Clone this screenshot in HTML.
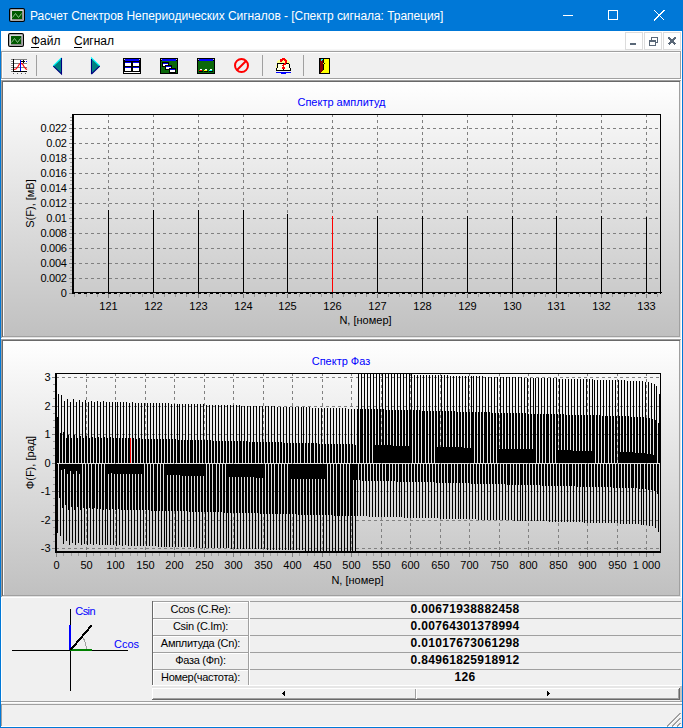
<!DOCTYPE html><html><head><meta charset="utf-8"><style>
*{margin:0;padding:0;box-sizing:border-box}
html,body{width:683px;height:728px;overflow:hidden;background:#f0f0f0;font-family:"Liberation Sans", sans-serif}
.a{position:absolute}
.t{position:absolute;white-space:nowrap;line-height:1}
svg{position:absolute;left:0;top:0}
</style></head><body><svg width="683" height="728" viewBox="0 0 683 728" shape-rendering="crispEdges" font-family='"Liberation Sans", sans-serif'><defs><linearGradient id="g" x1="0" y1="0" x2="0" y2="1"><stop offset="0" stop-color="#ffffff"/><stop offset="1" stop-color="#c0c0c0"/></linearGradient></defs><rect x="0" y="0" width="683" height="31" fill="#0078d7"/><rect x="0" y="0" width="1" height="728" fill="#0078d7"/><rect x="682" y="0" width="1" height="728" fill="#0078d7"/><rect x="0" y="727" width="683" height="1" fill="#0078d7"/><rect x="1" y="31" width="681" height="18" fill="#ffffff"/><rect x="1" y="49" width="681" height="1" fill="#f7f7f7"/><rect x="1" y="50" width="681" height="1" fill="#f0f0f0"/><rect x="1" y="51" width="680" height="1" fill="#a0a0a0"/><rect x="1" y="51" width="1" height="28" fill="#a0a0a0"/><rect x="2" y="52" width="679" height="1" fill="#ffffff"/><rect x="2" y="52" width="1" height="26" fill="#ffffff"/><rect x="1" y="78" width="680" height="1" fill="#a0a0a0"/><rect x="680" y="51" width="1" height="28" fill="#a0a0a0"/><rect x="1" y="79" width="681" height="1" fill="#ffffff"/><rect x="681" y="51" width="1" height="29" fill="#ffffff"/><rect x="1" y="80" width="680" height="1" fill="#a0a0a0"/><rect x="1" y="80" width="1" height="259" fill="#a0a0a0"/><rect x="2" y="81" width="678" height="1" fill="#696969"/><rect x="2" y="81" width="1" height="257" fill="#696969"/><rect x="1" y="338" width="681" height="1" fill="#ffffff"/><rect x="681" y="80" width="1" height="259" fill="#ffffff"/><rect x="2" y="337" width="679" height="1" fill="#e3e3e3"/><rect x="680" y="81" width="1" height="257" fill="#e3e3e3"/><rect x="3" y="82" width="677" height="255" fill="url(#g)"/><rect x="3" y="82" width="676" height="1" fill="#ffffff"/><rect x="3" y="82" width="1" height="254" fill="#ffffff"/><rect x="3" y="336" width="677" height="1" fill="#a0a0a0"/><rect x="679" y="82" width="1" height="255" fill="#a0a0a0"/><rect x="1" y="339" width="680" height="1" fill="#a0a0a0"/><rect x="1" y="339" width="1" height="259" fill="#a0a0a0"/><rect x="2" y="340" width="678" height="1" fill="#696969"/><rect x="2" y="340" width="1" height="257" fill="#696969"/><rect x="1" y="597" width="681" height="1" fill="#ffffff"/><rect x="681" y="339" width="1" height="259" fill="#ffffff"/><rect x="2" y="596" width="679" height="1" fill="#e3e3e3"/><rect x="680" y="340" width="1" height="257" fill="#e3e3e3"/><rect x="3" y="341" width="677" height="255" fill="url(#g)"/><rect x="3" y="341" width="676" height="1" fill="#ffffff"/><rect x="3" y="341" width="1" height="254" fill="#ffffff"/><rect x="3" y="595" width="677" height="1" fill="#a0a0a0"/><rect x="679" y="341" width="1" height="255" fill="#a0a0a0"/><rect x="1" y="598" width="1" height="103" fill="#ffffff"/><rect x="1" y="701" width="681" height="1" fill="#a0a0a0"/><rect x="1" y="702" width="681" height="1" fill="#ffffff"/><rect x="1" y="704" width="681" height="1" fill="#a0a0a0"/><rect x="1" y="705" width="1" height="21" fill="#a0a0a0"/><rect x="1" y="726" width="681" height="1" fill="#ffffff"/><line x1="667" y1="726.5" x2="680.5" y2="713" stroke="#a0a0a0" stroke-width="1.2"/><line x1="668" y1="726.5" x2="681" y2="714" stroke="#ffffff" stroke-width="0.8"/><line x1="672" y1="726.5" x2="680.5" y2="718" stroke="#a0a0a0" stroke-width="1.2"/><line x1="673" y1="726.5" x2="681" y2="719" stroke="#ffffff" stroke-width="0.8"/><line x1="677" y1="726.5" x2="680.5" y2="723" stroke="#a0a0a0" stroke-width="1.2"/><line x1="678" y1="726.5" x2="681" y2="724" stroke="#ffffff" stroke-width="0.8"/><rect x="152" y="601" width="529" height="1" fill="#a0a0a0"/><rect x="152" y="618" width="529" height="1" fill="#a0a0a0"/><rect x="153" y="602" width="95" height="1" fill="#ffffff"/><rect x="153" y="602" width="1" height="16" fill="#ffffff"/><rect x="152" y="635" width="529" height="1" fill="#a0a0a0"/><rect x="153" y="619" width="95" height="1" fill="#ffffff"/><rect x="153" y="619" width="1" height="16" fill="#ffffff"/><rect x="152" y="652" width="529" height="1" fill="#a0a0a0"/><rect x="153" y="636" width="95" height="1" fill="#ffffff"/><rect x="153" y="636" width="1" height="16" fill="#ffffff"/><rect x="152" y="669" width="529" height="1" fill="#a0a0a0"/><rect x="153" y="653" width="95" height="1" fill="#ffffff"/><rect x="153" y="653" width="1" height="16" fill="#ffffff"/><rect x="153" y="670" width="95" height="1" fill="#ffffff"/><rect x="153" y="670" width="1" height="16" fill="#ffffff"/><rect x="152" y="601" width="1" height="84" fill="#696969"/><rect x="248" y="601" width="1" height="84" fill="#a0a0a0"/><rect x="249" y="601" width="1" height="84" fill="#ffffff"/><rect x="152" y="685" width="529" height="1" fill="#ffffff"/><rect x="152" y="686" width="529" height="2" fill="#e6e6e6"/><rect x="680" y="686" width="2" height="15" fill="#c8c4c0"/><rect x="152" y="688" width="528" height="1" fill="#ffffff"/><rect x="152" y="688" width="1" height="12" fill="#ffffff"/><rect x="152" y="699" width="528" height="1" fill="#696969"/><rect x="679" y="688" width="1" height="12" fill="#696969"/><rect x="153" y="698" width="526" height="1" fill="#a0a0a0"/><rect x="678" y="689" width="1" height="10" fill="#a0a0a0"/><rect x="415" y="689" width="1" height="10" fill="#a0a0a0"/><rect x="416" y="689" width="1" height="10" fill="#ffffff"/><path d="M282 693.5 L285 690.5 L285 696.5 Z" fill="#000"/><path d="M550 693.5 L547 690.5 L547 696.5 Z" fill="#000"/><rect x="12" y="650" width="116" height="1" fill="#000"/><rect x="70" y="609" width="1" height="82" fill="#000"/><rect x="69" y="625" width="2" height="25" fill="#0000ff"/><rect x="70" y="649" width="22" height="2" fill="#008000"/><path d="M82 637 Q87 642 86 650" stroke="#a0a0a0" fill="none" stroke-width="1"/><line x1="70.5" y1="650" x2="91.5" y2="625.5" stroke="#000" stroke-width="2.1"/><text x="341.5" y="106" font-size="11" fill="#0000ff" text-anchor="middle" font-weight="400" >Спектр амплитуд</text><line x1="73" y1="278.5" x2="660" y2="278.5" stroke="#808080" stroke-width="1" stroke-dasharray="3 3"/><line x1="73" y1="263.5" x2="660" y2="263.5" stroke="#808080" stroke-width="1" stroke-dasharray="3 3"/><line x1="73" y1="248.5" x2="660" y2="248.5" stroke="#808080" stroke-width="1" stroke-dasharray="3 3"/><line x1="73" y1="233.5" x2="660" y2="233.5" stroke="#808080" stroke-width="1" stroke-dasharray="3 3"/><line x1="73" y1="218.5" x2="660" y2="218.5" stroke="#808080" stroke-width="1" stroke-dasharray="3 3"/><line x1="73" y1="203.5" x2="660" y2="203.5" stroke="#808080" stroke-width="1" stroke-dasharray="3 3"/><line x1="73" y1="188.5" x2="660" y2="188.5" stroke="#808080" stroke-width="1" stroke-dasharray="3 3"/><line x1="73" y1="173.5" x2="660" y2="173.5" stroke="#808080" stroke-width="1" stroke-dasharray="3 3"/><line x1="73" y1="158.5" x2="660" y2="158.5" stroke="#808080" stroke-width="1" stroke-dasharray="3 3"/><line x1="73" y1="143.5" x2="660" y2="143.5" stroke="#808080" stroke-width="1" stroke-dasharray="3 3"/><line x1="73" y1="128.5" x2="660" y2="128.5" stroke="#808080" stroke-width="1" stroke-dasharray="3 3"/><line x1="108.5" y1="114" x2="108.5" y2="291" stroke="#808080" stroke-width="1" stroke-dasharray="3 3"/><line x1="153.5" y1="114" x2="153.5" y2="291" stroke="#808080" stroke-width="1" stroke-dasharray="3 3"/><line x1="198.5" y1="114" x2="198.5" y2="291" stroke="#808080" stroke-width="1" stroke-dasharray="3 3"/><line x1="243.5" y1="114" x2="243.5" y2="291" stroke="#808080" stroke-width="1" stroke-dasharray="3 3"/><line x1="287.5" y1="114" x2="287.5" y2="291" stroke="#808080" stroke-width="1" stroke-dasharray="3 3"/><line x1="332.5" y1="114" x2="332.5" y2="291" stroke="#808080" stroke-width="1" stroke-dasharray="3 3"/><line x1="377.5" y1="114" x2="377.5" y2="291" stroke="#808080" stroke-width="1" stroke-dasharray="3 3"/><line x1="422.5" y1="114" x2="422.5" y2="291" stroke="#808080" stroke-width="1" stroke-dasharray="3 3"/><line x1="467.5" y1="114" x2="467.5" y2="291" stroke="#808080" stroke-width="1" stroke-dasharray="3 3"/><line x1="512.5" y1="114" x2="512.5" y2="291" stroke="#808080" stroke-width="1" stroke-dasharray="3 3"/><line x1="556.5" y1="114" x2="556.5" y2="291" stroke="#808080" stroke-width="1" stroke-dasharray="3 3"/><line x1="601.5" y1="114" x2="601.5" y2="291" stroke="#808080" stroke-width="1" stroke-dasharray="3 3"/><line x1="646.5" y1="114" x2="646.5" y2="291" stroke="#808080" stroke-width="1" stroke-dasharray="3 3"/><rect x="72" y="114" width="589" height="1" fill="#000"/><rect x="660" y="114" width="1" height="179" fill="#000"/><rect x="72" y="114" width="2" height="179" fill="#000"/><rect x="72" y="292" width="590" height="1" fill="#000"/><line x1="72" y1="293.5" x2="661" y2="293.5" stroke="#000" stroke-width="1" stroke-dasharray="3 3"/><rect x="69" y="293" width="3" height="1" fill="#808080"/><text x="66.7" y="297" font-size="11" fill="#000" text-anchor="end" font-weight="400" letter-spacing="-0.25" >0</text><rect x="69" y="278" width="3" height="1" fill="#808080"/><text x="66.7" y="282" font-size="11" fill="#000" text-anchor="end" font-weight="400" letter-spacing="-0.25" >0.002</text><rect x="69" y="263" width="3" height="1" fill="#808080"/><text x="66.7" y="267" font-size="11" fill="#000" text-anchor="end" font-weight="400" letter-spacing="-0.25" >0.004</text><rect x="69" y="248" width="3" height="1" fill="#808080"/><text x="66.7" y="252" font-size="11" fill="#000" text-anchor="end" font-weight="400" letter-spacing="-0.25" >0.006</text><rect x="69" y="233" width="3" height="1" fill="#808080"/><text x="66.7" y="237" font-size="11" fill="#000" text-anchor="end" font-weight="400" letter-spacing="-0.25" >0.008</text><rect x="69" y="218" width="3" height="1" fill="#808080"/><text x="66.7" y="222" font-size="11" fill="#000" text-anchor="end" font-weight="400" letter-spacing="-0.25" >0.01</text><rect x="69" y="203" width="3" height="1" fill="#808080"/><text x="66.7" y="207" font-size="11" fill="#000" text-anchor="end" font-weight="400" letter-spacing="-0.25" >0.012</text><rect x="69" y="188" width="3" height="1" fill="#808080"/><text x="66.7" y="192" font-size="11" fill="#000" text-anchor="end" font-weight="400" letter-spacing="-0.25" >0.014</text><rect x="69" y="173" width="3" height="1" fill="#808080"/><text x="66.7" y="177" font-size="11" fill="#000" text-anchor="end" font-weight="400" letter-spacing="-0.25" >0.016</text><rect x="69" y="158" width="3" height="1" fill="#808080"/><text x="66.7" y="162" font-size="11" fill="#000" text-anchor="end" font-weight="400" letter-spacing="-0.25" >0.018</text><rect x="69" y="143" width="3" height="1" fill="#808080"/><text x="66.7" y="147" font-size="11" fill="#000" text-anchor="end" font-weight="400" letter-spacing="-0.25" >0.02</text><rect x="69" y="128" width="3" height="1" fill="#808080"/><text x="66.7" y="132" font-size="11" fill="#000" text-anchor="end" font-weight="400" letter-spacing="-0.25" >0.022</text><rect x="70" y="289" width="2" height="1" fill="#a0a0a0"/><rect x="70" y="286" width="2" height="1" fill="#a0a0a0"/><rect x="70" y="282" width="2" height="1" fill="#a0a0a0"/><rect x="70" y="274" width="2" height="1" fill="#a0a0a0"/><rect x="70" y="270" width="2" height="1" fill="#a0a0a0"/><rect x="70" y="267" width="2" height="1" fill="#a0a0a0"/><rect x="70" y="259" width="2" height="1" fill="#a0a0a0"/><rect x="70" y="256" width="2" height="1" fill="#a0a0a0"/><rect x="70" y="252" width="2" height="1" fill="#a0a0a0"/><rect x="70" y="244" width="2" height="1" fill="#a0a0a0"/><rect x="70" y="240" width="2" height="1" fill="#a0a0a0"/><rect x="70" y="237" width="2" height="1" fill="#a0a0a0"/><rect x="70" y="229" width="2" height="1" fill="#a0a0a0"/><rect x="70" y="226" width="2" height="1" fill="#a0a0a0"/><rect x="70" y="222" width="2" height="1" fill="#a0a0a0"/><rect x="70" y="214" width="2" height="1" fill="#a0a0a0"/><rect x="70" y="210" width="2" height="1" fill="#a0a0a0"/><rect x="70" y="207" width="2" height="1" fill="#a0a0a0"/><rect x="70" y="199" width="2" height="1" fill="#a0a0a0"/><rect x="70" y="196" width="2" height="1" fill="#a0a0a0"/><rect x="70" y="192" width="2" height="1" fill="#a0a0a0"/><rect x="70" y="184" width="2" height="1" fill="#a0a0a0"/><rect x="70" y="180" width="2" height="1" fill="#a0a0a0"/><rect x="70" y="177" width="2" height="1" fill="#a0a0a0"/><rect x="70" y="169" width="2" height="1" fill="#a0a0a0"/><rect x="70" y="166" width="2" height="1" fill="#a0a0a0"/><rect x="70" y="162" width="2" height="1" fill="#a0a0a0"/><rect x="70" y="154" width="2" height="1" fill="#a0a0a0"/><rect x="70" y="150" width="2" height="1" fill="#a0a0a0"/><rect x="70" y="147" width="2" height="1" fill="#a0a0a0"/><rect x="70" y="139" width="2" height="1" fill="#a0a0a0"/><rect x="70" y="136" width="2" height="1" fill="#a0a0a0"/><rect x="70" y="132" width="2" height="1" fill="#a0a0a0"/><rect x="70" y="124" width="2" height="1" fill="#a0a0a0"/><rect x="70" y="120" width="2" height="1" fill="#a0a0a0"/><rect x="70" y="117" width="2" height="1" fill="#a0a0a0"/><rect x="108" y="294" width="1" height="4" fill="#808080"/><text x="108.5" y="310" font-size="11" fill="#000" text-anchor="middle" font-weight="400" >121</text><rect x="153" y="294" width="1" height="4" fill="#808080"/><text x="153.5" y="310" font-size="11" fill="#000" text-anchor="middle" font-weight="400" >122</text><rect x="198" y="294" width="1" height="4" fill="#808080"/><text x="198.5" y="310" font-size="11" fill="#000" text-anchor="middle" font-weight="400" >123</text><rect x="243" y="294" width="1" height="4" fill="#808080"/><text x="243.5" y="310" font-size="11" fill="#000" text-anchor="middle" font-weight="400" >124</text><rect x="287" y="294" width="1" height="4" fill="#808080"/><text x="287.5" y="310" font-size="11" fill="#000" text-anchor="middle" font-weight="400" >125</text><rect x="332" y="294" width="1" height="4" fill="#808080"/><text x="332.5" y="310" font-size="11" fill="#000" text-anchor="middle" font-weight="400" >126</text><rect x="377" y="294" width="1" height="4" fill="#808080"/><text x="377.5" y="310" font-size="11" fill="#000" text-anchor="middle" font-weight="400" >127</text><rect x="422" y="294" width="1" height="4" fill="#808080"/><text x="422.5" y="310" font-size="11" fill="#000" text-anchor="middle" font-weight="400" >128</text><rect x="467" y="294" width="1" height="4" fill="#808080"/><text x="467.5" y="310" font-size="11" fill="#000" text-anchor="middle" font-weight="400" >129</text><rect x="512" y="294" width="1" height="4" fill="#808080"/><text x="512.5" y="310" font-size="11" fill="#000" text-anchor="middle" font-weight="400" >130</text><rect x="556" y="294" width="1" height="4" fill="#808080"/><text x="556.5" y="310" font-size="11" fill="#000" text-anchor="middle" font-weight="400" >131</text><rect x="601" y="294" width="1" height="4" fill="#808080"/><text x="601.5" y="310" font-size="11" fill="#000" text-anchor="middle" font-weight="400" >132</text><rect x="646" y="294" width="1" height="4" fill="#808080"/><text x="646.5" y="310" font-size="11" fill="#000" text-anchor="middle" font-weight="400" >133</text><rect x="74" y="294" width="1" height="3" fill="#a0a0a0"/><rect x="86" y="294" width="1" height="3" fill="#a0a0a0"/><rect x="97" y="294" width="1" height="3" fill="#a0a0a0"/><rect x="119" y="294" width="1" height="3" fill="#a0a0a0"/><rect x="130" y="294" width="1" height="3" fill="#a0a0a0"/><rect x="142" y="294" width="1" height="3" fill="#a0a0a0"/><rect x="164" y="294" width="1" height="3" fill="#a0a0a0"/><rect x="175" y="294" width="1" height="3" fill="#a0a0a0"/><rect x="186" y="294" width="1" height="3" fill="#a0a0a0"/><rect x="209" y="294" width="1" height="3" fill="#a0a0a0"/><rect x="220" y="294" width="1" height="3" fill="#a0a0a0"/><rect x="231" y="294" width="1" height="3" fill="#a0a0a0"/><rect x="254" y="294" width="1" height="3" fill="#a0a0a0"/><rect x="265" y="294" width="1" height="3" fill="#a0a0a0"/><rect x="276" y="294" width="1" height="3" fill="#a0a0a0"/><rect x="299" y="294" width="1" height="3" fill="#a0a0a0"/><rect x="310" y="294" width="1" height="3" fill="#a0a0a0"/><rect x="321" y="294" width="1" height="3" fill="#a0a0a0"/><rect x="343" y="294" width="1" height="3" fill="#a0a0a0"/><rect x="355" y="294" width="1" height="3" fill="#a0a0a0"/><rect x="366" y="294" width="1" height="3" fill="#a0a0a0"/><rect x="388" y="294" width="1" height="3" fill="#a0a0a0"/><rect x="399" y="294" width="1" height="3" fill="#a0a0a0"/><rect x="411" y="294" width="1" height="3" fill="#a0a0a0"/><rect x="433" y="294" width="1" height="3" fill="#a0a0a0"/><rect x="444" y="294" width="1" height="3" fill="#a0a0a0"/><rect x="455" y="294" width="1" height="3" fill="#a0a0a0"/><rect x="478" y="294" width="1" height="3" fill="#a0a0a0"/><rect x="489" y="294" width="1" height="3" fill="#a0a0a0"/><rect x="500" y="294" width="1" height="3" fill="#a0a0a0"/><rect x="523" y="294" width="1" height="3" fill="#a0a0a0"/><rect x="534" y="294" width="1" height="3" fill="#a0a0a0"/><rect x="545" y="294" width="1" height="3" fill="#a0a0a0"/><rect x="568" y="294" width="1" height="3" fill="#a0a0a0"/><rect x="579" y="294" width="1" height="3" fill="#a0a0a0"/><rect x="590" y="294" width="1" height="3" fill="#a0a0a0"/><rect x="612" y="294" width="1" height="3" fill="#a0a0a0"/><rect x="624" y="294" width="1" height="3" fill="#a0a0a0"/><rect x="635" y="294" width="1" height="3" fill="#a0a0a0"/><rect x="657" y="294" width="1" height="3" fill="#a0a0a0"/><rect x="108" y="210" width="1" height="82" fill="#000"/><rect x="153" y="210" width="1" height="82" fill="#000"/><rect x="198" y="210" width="1" height="82" fill="#000"/><rect x="243" y="210" width="1" height="82" fill="#000"/><rect x="287" y="214" width="1" height="78" fill="#000"/><rect x="332" y="216" width="1" height="76" fill="#ff0000"/><rect x="377" y="216" width="1" height="76" fill="#000"/><rect x="422" y="216" width="1" height="76" fill="#000"/><rect x="467" y="216" width="1" height="76" fill="#000"/><rect x="512" y="216" width="1" height="76" fill="#000"/><rect x="556" y="216" width="1" height="76" fill="#000"/><rect x="601" y="216" width="1" height="76" fill="#000"/><rect x="646" y="217" width="1" height="75" fill="#000"/><text x="365.5" y="323.5" font-size="11" fill="#000" text-anchor="middle" font-weight="400" >N, [номер]</text><text x="0" y="0" font-size="11" fill="#000" text-anchor="middle" font-weight="400" transform="translate(34,203.5) rotate(-90)">S(F), [мВ]</text><text x="341" y="365" font-size="11" fill="#0000ff" text-anchor="middle" font-weight="400" >Спектр Фаз</text><line x1="56" y1="377.5" x2="660" y2="377.5" stroke="#808080" stroke-width="1" stroke-dasharray="3 3"/><line x1="56" y1="406.5" x2="660" y2="406.5" stroke="#808080" stroke-width="1" stroke-dasharray="3 3"/><line x1="56" y1="434.5" x2="660" y2="434.5" stroke="#808080" stroke-width="1" stroke-dasharray="3 3"/><line x1="56" y1="491.5" x2="660" y2="491.5" stroke="#808080" stroke-width="1" stroke-dasharray="3 3"/><line x1="56" y1="520.5" x2="660" y2="520.5" stroke="#808080" stroke-width="1" stroke-dasharray="3 3"/><line x1="56" y1="548.5" x2="660" y2="548.5" stroke="#808080" stroke-width="1" stroke-dasharray="3 3"/><line x1="86.5" y1="373" x2="86.5" y2="550" stroke="#808080" stroke-width="1" stroke-dasharray="3 3"/><line x1="115.5" y1="373" x2="115.5" y2="550" stroke="#808080" stroke-width="1" stroke-dasharray="3 3"/><line x1="145.5" y1="373" x2="145.5" y2="550" stroke="#808080" stroke-width="1" stroke-dasharray="3 3"/><line x1="174.5" y1="373" x2="174.5" y2="550" stroke="#808080" stroke-width="1" stroke-dasharray="3 3"/><line x1="204.5" y1="373" x2="204.5" y2="550" stroke="#808080" stroke-width="1" stroke-dasharray="3 3"/><line x1="233.5" y1="373" x2="233.5" y2="550" stroke="#808080" stroke-width="1" stroke-dasharray="3 3"/><line x1="263.5" y1="373" x2="263.5" y2="550" stroke="#808080" stroke-width="1" stroke-dasharray="3 3"/><line x1="292.5" y1="373" x2="292.5" y2="550" stroke="#808080" stroke-width="1" stroke-dasharray="3 3"/><line x1="322.5" y1="373" x2="322.5" y2="550" stroke="#808080" stroke-width="1" stroke-dasharray="3 3"/><line x1="351.5" y1="373" x2="351.5" y2="550" stroke="#808080" stroke-width="1" stroke-dasharray="3 3"/><line x1="381.5" y1="373" x2="381.5" y2="550" stroke="#808080" stroke-width="1" stroke-dasharray="3 3"/><line x1="410.5" y1="373" x2="410.5" y2="550" stroke="#808080" stroke-width="1" stroke-dasharray="3 3"/><line x1="440.5" y1="373" x2="440.5" y2="550" stroke="#808080" stroke-width="1" stroke-dasharray="3 3"/><line x1="469.5" y1="373" x2="469.5" y2="550" stroke="#808080" stroke-width="1" stroke-dasharray="3 3"/><line x1="499.5" y1="373" x2="499.5" y2="550" stroke="#808080" stroke-width="1" stroke-dasharray="3 3"/><line x1="528.5" y1="373" x2="528.5" y2="550" stroke="#808080" stroke-width="1" stroke-dasharray="3 3"/><line x1="558.5" y1="373" x2="558.5" y2="550" stroke="#808080" stroke-width="1" stroke-dasharray="3 3"/><line x1="587.5" y1="373" x2="587.5" y2="550" stroke="#808080" stroke-width="1" stroke-dasharray="3 3"/><line x1="617.5" y1="373" x2="617.5" y2="550" stroke="#808080" stroke-width="1" stroke-dasharray="3 3"/><line x1="646.5" y1="373" x2="646.5" y2="550" stroke="#808080" stroke-width="1" stroke-dasharray="3 3"/><rect x="56" y="464" width="1" height="27"/><rect x="57" y="417" width="1" height="46"/><rect x="57" y="464" width="1" height="69"/><rect x="58" y="394" width="1" height="69"/><rect x="59" y="464" width="1" height="34"/><rect x="60" y="433" width="1" height="30"/><rect x="60" y="464" width="1" height="72"/><rect x="61" y="395" width="1" height="68"/><rect x="61" y="464" width="1" height="6"/><rect x="62" y="464" width="1" height="44"/><rect x="63" y="432" width="1" height="31"/><rect x="63" y="464" width="1" height="80"/><rect x="64" y="401" width="1" height="62"/><rect x="64" y="464" width="1" height="5"/><rect x="65" y="464" width="1" height="41"/><rect x="66" y="438" width="1" height="25"/><rect x="66" y="464" width="1" height="77"/><rect x="67" y="399" width="1" height="64"/><rect x="67" y="464" width="1" height="10"/><rect x="68" y="435" width="1" height="28"/><rect x="68" y="464" width="1" height="46"/><rect x="69" y="464" width="1" height="81"/><rect x="70" y="402" width="1" height="61"/><rect x="70" y="464" width="1" height="7"/><rect x="71" y="438" width="1" height="25"/><rect x="71" y="464" width="1" height="43"/><rect x="72" y="464" width="1" height="79"/><rect x="73" y="399" width="1" height="64"/><rect x="73" y="464" width="1" height="10"/><rect x="74" y="435" width="1" height="28"/><rect x="74" y="464" width="1" height="46"/><rect x="75" y="464" width="1" height="81"/><rect x="76" y="402" width="1" height="61"/><rect x="76" y="464" width="1" height="7"/><rect x="77" y="438" width="1" height="25"/><rect x="77" y="464" width="1" height="43"/><rect x="78" y="464" width="1" height="79"/><rect x="79" y="400" width="1" height="63"/><rect x="79" y="464" width="1" height="10"/><rect x="80" y="436" width="1" height="27"/><rect x="80" y="464" width="1" height="46"/><rect x="81" y="464" width="1" height="81"/><rect x="82" y="402" width="1" height="61"/><rect x="83" y="438" width="1" height="25"/><rect x="83" y="464" width="1" height="44"/><rect x="84" y="464" width="1" height="80"/><rect x="85" y="400" width="1" height="63"/><rect x="86" y="436" width="1" height="27"/><rect x="86" y="464" width="1" height="45"/><rect x="87" y="464" width="1" height="81"/><rect x="88" y="402" width="1" height="61"/><rect x="89" y="438" width="1" height="25"/><rect x="89" y="464" width="1" height="44"/><rect x="90" y="464" width="1" height="80"/><rect x="91" y="401" width="1" height="62"/><rect x="92" y="437" width="1" height="26"/><rect x="92" y="464" width="1" height="45"/><rect x="93" y="464" width="1" height="81"/><rect x="94" y="402" width="1" height="61"/><rect x="94" y="464" width="1" height="44"/><rect x="95" y="438" width="1" height="25"/><rect x="96" y="464" width="1" height="80"/><rect x="97" y="401" width="1" height="62"/><rect x="97" y="464" width="1" height="45"/><rect x="98" y="437" width="1" height="26"/><rect x="99" y="464" width="1" height="81"/><rect x="100" y="402" width="1" height="61"/><rect x="100" y="464" width="1" height="45"/><rect x="101" y="438" width="1" height="25"/><rect x="102" y="464" width="1" height="81"/><rect x="103" y="401" width="1" height="62"/><rect x="103" y="464" width="1" height="46"/><rect x="104" y="437" width="1" height="26"/><rect x="105" y="464" width="1" height="81"/><rect x="106" y="402" width="1" height="61"/><rect x="106" y="464" width="1" height="45"/><rect x="107" y="438" width="1" height="25"/><rect x="107" y="464" width="1" height="81"/><rect x="108" y="464" width="1" height="10"/><rect x="109" y="402" width="1" height="61"/><rect x="109" y="464" width="1" height="46"/><rect x="110" y="437" width="1" height="26"/><rect x="110" y="464" width="1" height="81"/><rect x="111" y="464" width="1" height="9"/><rect x="112" y="402" width="1" height="61"/><rect x="112" y="464" width="1" height="45"/><rect x="113" y="438" width="1" height="25"/><rect x="113" y="464" width="1" height="81"/><rect x="114" y="464" width="1" height="10"/><rect x="115" y="402" width="1" height="61"/><rect x="115" y="464" width="1" height="46"/><rect x="116" y="438" width="1" height="25"/><rect x="116" y="464" width="1" height="82"/><rect x="117" y="402" width="1" height="61"/><rect x="117" y="464" width="1" height="10"/><rect x="118" y="464" width="1" height="45"/><rect x="119" y="438" width="1" height="25"/><rect x="119" y="464" width="1" height="81"/><rect x="120" y="402" width="1" height="61"/><rect x="120" y="464" width="1" height="10"/><rect x="121" y="464" width="1" height="46"/><rect x="122" y="438" width="1" height="25"/><rect x="122" y="464" width="1" height="82"/><rect x="123" y="402" width="1" height="61"/><rect x="123" y="464" width="1" height="10"/><rect x="124" y="464" width="1" height="46"/><rect x="125" y="438" width="1" height="25"/><rect x="125" y="464" width="1" height="81"/><rect x="126" y="402" width="1" height="61"/><rect x="126" y="464" width="1" height="10"/><rect x="127" y="464" width="1" height="46"/><rect x="128" y="438" width="1" height="25"/><rect x="128" y="464" width="1" height="82"/><rect x="129" y="403" width="1" height="60"/><rect x="129" y="464" width="1" height="10"/><rect x="130" y="438" width="1" height="25"/><rect x="130" y="464" width="1" height="46"/><rect x="131" y="464" width="1" height="82"/><rect x="132" y="402" width="1" height="61"/><rect x="132" y="464" width="1" height="10"/><rect x="133" y="438" width="1" height="25"/><rect x="133" y="464" width="1" height="46"/><rect x="134" y="464" width="1" height="82"/><rect x="135" y="403" width="1" height="60"/><rect x="135" y="464" width="1" height="10"/><rect x="136" y="439" width="1" height="24"/><rect x="136" y="464" width="1" height="46"/><rect x="137" y="464" width="1" height="82"/><rect x="138" y="403" width="1" height="60"/><rect x="138" y="464" width="1" height="10"/><rect x="139" y="438" width="1" height="25"/><rect x="139" y="464" width="1" height="46"/><rect x="140" y="464" width="1" height="82"/><rect x="141" y="403" width="1" height="60"/><rect x="141" y="464" width="1" height="10"/><rect x="142" y="439" width="1" height="24"/><rect x="142" y="464" width="1" height="46"/><rect x="143" y="464" width="1" height="82"/><rect x="144" y="403" width="1" height="60"/><rect x="145" y="439" width="1" height="24"/><rect x="145" y="464" width="1" height="46"/><rect x="146" y="464" width="1" height="82"/><rect x="147" y="403" width="1" height="60"/><rect x="148" y="439" width="1" height="24"/><rect x="148" y="464" width="1" height="46"/><rect x="149" y="464" width="1" height="82"/><rect x="150" y="403" width="1" height="60"/><rect x="151" y="439" width="1" height="24"/><rect x="151" y="464" width="1" height="47"/><rect x="152" y="464" width="1" height="82"/><rect x="153" y="403" width="1" height="60"/><rect x="154" y="439" width="1" height="24"/><rect x="154" y="464" width="1" height="47"/><rect x="155" y="464" width="1" height="82"/><rect x="156" y="403" width="1" height="60"/><rect x="156" y="464" width="1" height="47"/><rect x="157" y="439" width="1" height="24"/><rect x="158" y="464" width="1" height="83"/><rect x="159" y="403" width="1" height="60"/><rect x="159" y="464" width="1" height="47"/><rect x="160" y="439" width="1" height="24"/><rect x="161" y="464" width="1" height="83"/><rect x="162" y="403" width="1" height="60"/><rect x="162" y="464" width="1" height="47"/><rect x="163" y="439" width="1" height="24"/><rect x="164" y="464" width="1" height="83"/><rect x="165" y="403" width="1" height="60"/><rect x="165" y="464" width="1" height="47"/><rect x="166" y="439" width="1" height="24"/><rect x="166" y="464" width="1" height="83"/><rect x="167" y="464" width="1" height="11"/><rect x="168" y="403" width="1" height="60"/><rect x="168" y="464" width="1" height="47"/><rect x="169" y="439" width="1" height="24"/><rect x="169" y="464" width="1" height="83"/><rect x="170" y="464" width="1" height="11"/><rect x="171" y="404" width="1" height="59"/><rect x="171" y="464" width="1" height="47"/><rect x="172" y="439" width="1" height="24"/><rect x="172" y="464" width="1" height="83"/><rect x="173" y="464" width="1" height="11"/><rect x="174" y="404" width="1" height="59"/><rect x="174" y="464" width="1" height="47"/><rect x="175" y="439" width="1" height="24"/><rect x="175" y="464" width="1" height="83"/><rect x="176" y="464" width="1" height="11"/><rect x="177" y="404" width="1" height="59"/><rect x="177" y="464" width="1" height="47"/><rect x="178" y="440" width="1" height="23"/><rect x="178" y="464" width="1" height="83"/><rect x="179" y="404" width="1" height="59"/><rect x="179" y="464" width="1" height="11"/><rect x="180" y="464" width="1" height="47"/><rect x="181" y="440" width="1" height="23"/><rect x="181" y="464" width="1" height="83"/><rect x="182" y="404" width="1" height="59"/><rect x="182" y="464" width="1" height="12"/><rect x="183" y="464" width="1" height="47"/><rect x="184" y="440" width="1" height="23"/><rect x="184" y="464" width="1" height="83"/><rect x="185" y="404" width="1" height="59"/><rect x="185" y="464" width="1" height="12"/><rect x="186" y="464" width="1" height="47"/><rect x="187" y="440" width="1" height="23"/><rect x="187" y="464" width="1" height="83"/><rect x="188" y="404" width="1" height="59"/><rect x="188" y="464" width="1" height="12"/><rect x="189" y="464" width="1" height="48"/><rect x="190" y="440" width="1" height="23"/><rect x="190" y="464" width="1" height="83"/><rect x="191" y="404" width="1" height="59"/><rect x="191" y="464" width="1" height="12"/><rect x="192" y="440" width="1" height="23"/><rect x="192" y="464" width="1" height="48"/><rect x="193" y="464" width="1" height="83"/><rect x="194" y="404" width="1" height="59"/><rect x="194" y="464" width="1" height="12"/><rect x="195" y="440" width="1" height="23"/><rect x="195" y="464" width="1" height="48"/><rect x="196" y="464" width="1" height="84"/><rect x="197" y="404" width="1" height="59"/><rect x="197" y="464" width="1" height="12"/><rect x="198" y="440" width="1" height="23"/><rect x="198" y="464" width="1" height="48"/><rect x="199" y="464" width="1" height="84"/><rect x="200" y="404" width="1" height="59"/><rect x="200" y="464" width="1" height="12"/><rect x="201" y="440" width="1" height="23"/><rect x="201" y="464" width="1" height="48"/><rect x="202" y="464" width="1" height="84"/><rect x="203" y="404" width="1" height="59"/><rect x="203" y="464" width="1" height="12"/><rect x="204" y="440" width="1" height="23"/><rect x="204" y="464" width="1" height="48"/><rect x="205" y="464" width="1" height="84"/><rect x="206" y="405" width="1" height="58"/><rect x="207" y="440" width="1" height="23"/><rect x="207" y="464" width="1" height="48"/><rect x="208" y="464" width="1" height="84"/><rect x="209" y="405" width="1" height="58"/><rect x="210" y="440" width="1" height="23"/><rect x="210" y="464" width="1" height="48"/><rect x="211" y="464" width="1" height="84"/><rect x="212" y="405" width="1" height="58"/><rect x="213" y="441" width="1" height="22"/><rect x="213" y="464" width="1" height="48"/><rect x="214" y="464" width="1" height="84"/><rect x="215" y="405" width="1" height="58"/><rect x="215" y="464" width="1" height="48"/><rect x="216" y="441" width="1" height="22"/><rect x="217" y="464" width="1" height="84"/><rect x="218" y="405" width="1" height="58"/><rect x="218" y="464" width="1" height="48"/><rect x="219" y="441" width="1" height="22"/><rect x="220" y="464" width="1" height="84"/><rect x="221" y="405" width="1" height="58"/><rect x="221" y="464" width="1" height="48"/><rect x="222" y="441" width="1" height="22"/><rect x="223" y="464" width="1" height="84"/><rect x="224" y="405" width="1" height="58"/><rect x="224" y="464" width="1" height="49"/><rect x="225" y="441" width="1" height="22"/><rect x="226" y="464" width="1" height="84"/><rect x="227" y="405" width="1" height="58"/><rect x="227" y="464" width="1" height="49"/><rect x="228" y="441" width="1" height="22"/><rect x="228" y="464" width="1" height="84"/><rect x="229" y="464" width="1" height="13"/><rect x="230" y="405" width="1" height="58"/><rect x="230" y="464" width="1" height="49"/><rect x="231" y="441" width="1" height="22"/><rect x="231" y="464" width="1" height="85"/><rect x="232" y="464" width="1" height="13"/><rect x="233" y="405" width="1" height="58"/><rect x="233" y="464" width="1" height="49"/><rect x="234" y="441" width="1" height="22"/><rect x="234" y="464" width="1" height="85"/><rect x="235" y="464" width="1" height="13"/><rect x="236" y="405" width="1" height="58"/><rect x="236" y="464" width="1" height="49"/><rect x="237" y="441" width="1" height="22"/><rect x="237" y="464" width="1" height="85"/><rect x="238" y="464" width="1" height="13"/><rect x="239" y="405" width="1" height="58"/><rect x="239" y="464" width="1" height="49"/><rect x="240" y="441" width="1" height="22"/><rect x="240" y="464" width="1" height="85"/><rect x="241" y="406" width="1" height="57"/><rect x="241" y="464" width="1" height="13"/><rect x="242" y="464" width="1" height="49"/><rect x="243" y="441" width="1" height="22"/><rect x="243" y="464" width="1" height="85"/><rect x="244" y="406" width="1" height="57"/><rect x="244" y="464" width="1" height="13"/><rect x="245" y="464" width="1" height="49"/><rect x="246" y="441" width="1" height="22"/><rect x="246" y="464" width="1" height="85"/><rect x="247" y="406" width="1" height="57"/><rect x="247" y="464" width="1" height="13"/><rect x="248" y="464" width="1" height="49"/><rect x="249" y="442" width="1" height="21"/><rect x="249" y="464" width="1" height="85"/><rect x="250" y="406" width="1" height="57"/><rect x="250" y="464" width="1" height="13"/><rect x="251" y="464" width="1" height="49"/><rect x="252" y="442" width="1" height="21"/><rect x="252" y="464" width="1" height="85"/><rect x="253" y="406" width="1" height="57"/><rect x="253" y="464" width="1" height="13"/><rect x="254" y="442" width="1" height="21"/><rect x="254" y="464" width="1" height="49"/><rect x="255" y="464" width="1" height="85"/><rect x="256" y="406" width="1" height="57"/><rect x="256" y="464" width="1" height="14"/><rect x="257" y="442" width="1" height="21"/><rect x="257" y="464" width="1" height="49"/><rect x="258" y="464" width="1" height="85"/><rect x="259" y="406" width="1" height="57"/><rect x="259" y="464" width="1" height="14"/><rect x="260" y="442" width="1" height="21"/><rect x="260" y="464" width="1" height="50"/><rect x="261" y="464" width="1" height="85"/><rect x="262" y="406" width="1" height="57"/><rect x="262" y="464" width="1" height="14"/><rect x="263" y="442" width="1" height="21"/><rect x="263" y="464" width="1" height="50"/><rect x="264" y="464" width="1" height="85"/><rect x="265" y="406" width="1" height="57"/><rect x="266" y="442" width="1" height="21"/><rect x="266" y="464" width="1" height="50"/><rect x="267" y="464" width="1" height="86"/><rect x="268" y="406" width="1" height="57"/><rect x="269" y="442" width="1" height="21"/><rect x="269" y="464" width="1" height="50"/><rect x="270" y="464" width="1" height="86"/><rect x="271" y="406" width="1" height="57"/><rect x="272" y="442" width="1" height="21"/><rect x="272" y="464" width="1" height="50"/><rect x="273" y="464" width="1" height="86"/><rect x="274" y="406" width="1" height="57"/><rect x="275" y="442" width="1" height="21"/><rect x="275" y="464" width="1" height="50"/><rect x="276" y="464" width="1" height="86"/><rect x="277" y="407" width="1" height="56"/><rect x="277" y="464" width="1" height="50"/><rect x="278" y="442" width="1" height="21"/><rect x="279" y="464" width="1" height="86"/><rect x="280" y="407" width="1" height="56"/><rect x="280" y="464" width="1" height="50"/><rect x="281" y="442" width="1" height="21"/><rect x="282" y="464" width="1" height="86"/><rect x="283" y="407" width="1" height="56"/><rect x="283" y="464" width="1" height="50"/><rect x="284" y="443" width="1" height="20"/><rect x="285" y="464" width="1" height="86"/><rect x="286" y="407" width="1" height="56"/><rect x="286" y="464" width="1" height="50"/><rect x="287" y="443" width="1" height="20"/><rect x="288" y="464" width="1" height="86"/><rect x="289" y="407" width="1" height="56"/><rect x="289" y="464" width="1" height="50"/><rect x="290" y="443" width="1" height="20"/><rect x="290" y="464" width="1" height="86"/><rect x="291" y="464" width="1" height="15"/><rect x="292" y="407" width="1" height="56"/><rect x="292" y="464" width="1" height="50"/><rect x="293" y="443" width="1" height="20"/><rect x="293" y="464" width="1" height="86"/><rect x="294" y="464" width="1" height="15"/><rect x="295" y="407" width="1" height="56"/><rect x="295" y="464" width="1" height="50"/><rect x="296" y="443" width="1" height="20"/><rect x="296" y="464" width="1" height="86"/><rect x="297" y="464" width="1" height="15"/><rect x="298" y="407" width="1" height="56"/><rect x="298" y="464" width="1" height="51"/><rect x="299" y="443" width="1" height="20"/><rect x="299" y="464" width="1" height="86"/><rect x="300" y="464" width="1" height="15"/><rect x="301" y="407" width="1" height="56"/><rect x="301" y="464" width="1" height="51"/><rect x="302" y="443" width="1" height="20"/><rect x="302" y="464" width="1" height="86"/><rect x="303" y="407" width="1" height="56"/><rect x="303" y="464" width="1" height="15"/><rect x="304" y="464" width="1" height="51"/><rect x="305" y="443" width="1" height="20"/><rect x="305" y="464" width="1" height="87"/><rect x="306" y="407" width="1" height="56"/><rect x="306" y="464" width="1" height="15"/><rect x="307" y="464" width="1" height="51"/><rect x="308" y="443" width="1" height="20"/><rect x="308" y="464" width="1" height="87"/><rect x="309" y="407" width="1" height="56"/><rect x="309" y="464" width="1" height="15"/><rect x="310" y="464" width="1" height="51"/><rect x="311" y="443" width="1" height="20"/><rect x="311" y="464" width="1" height="87"/><rect x="312" y="408" width="1" height="55"/><rect x="312" y="464" width="1" height="15"/><rect x="313" y="443" width="1" height="20"/><rect x="313" y="464" width="1" height="51"/><rect x="314" y="464" width="1" height="87"/><rect x="315" y="408" width="1" height="55"/><rect x="315" y="464" width="1" height="15"/><rect x="316" y="443" width="1" height="20"/><rect x="316" y="464" width="1" height="51"/><rect x="317" y="464" width="1" height="87"/><rect x="318" y="408" width="1" height="55"/><rect x="318" y="464" width="1" height="15"/><rect x="319" y="444" width="1" height="19"/><rect x="319" y="464" width="1" height="51"/><rect x="320" y="464" width="1" height="87"/><rect x="321" y="408" width="1" height="55"/><rect x="321" y="464" width="1" height="15"/><rect x="322" y="444" width="1" height="19"/><rect x="322" y="464" width="1" height="51"/><rect x="323" y="464" width="1" height="87"/><rect x="324" y="408" width="1" height="55"/><rect x="324" y="464" width="1" height="15"/><rect x="325" y="444" width="1" height="19"/><rect x="325" y="464" width="1" height="51"/><rect x="326" y="464" width="1" height="87"/><rect x="327" y="408" width="1" height="55"/><rect x="328" y="444" width="1" height="19"/><rect x="328" y="464" width="1" height="51"/><rect x="329" y="464" width="1" height="87"/><rect x="330" y="408" width="1" height="55"/><rect x="331" y="444" width="1" height="19"/><rect x="331" y="464" width="1" height="51"/><rect x="332" y="464" width="1" height="87"/><rect x="333" y="408" width="1" height="55"/><rect x="334" y="444" width="1" height="19"/><rect x="334" y="464" width="1" height="52"/><rect x="335" y="464" width="1" height="87"/><rect x="336" y="408" width="1" height="55"/><rect x="337" y="444" width="1" height="19"/><rect x="337" y="464" width="1" height="52"/><rect x="338" y="464" width="1" height="87"/><rect x="339" y="408" width="1" height="55"/><rect x="339" y="464" width="1" height="52"/><rect x="340" y="444" width="1" height="19"/><rect x="341" y="464" width="1" height="87"/><rect x="342" y="408" width="1" height="55"/><rect x="342" y="464" width="1" height="52"/><rect x="343" y="444" width="1" height="19"/><rect x="344" y="464" width="1" height="87"/><rect x="345" y="408" width="1" height="55"/><rect x="345" y="464" width="1" height="52"/><rect x="346" y="444" width="1" height="19"/><rect x="347" y="464" width="1" height="87"/><rect x="348" y="409" width="1" height="54"/><rect x="348" y="464" width="1" height="52"/><rect x="349" y="444" width="1" height="19"/><rect x="350" y="464" width="1" height="87"/><rect x="351" y="409" width="1" height="54"/><rect x="351" y="464" width="1" height="52"/><rect x="352" y="444" width="1" height="19"/><rect x="352" y="464" width="1" height="87"/><rect x="353" y="464" width="1" height="16"/><rect x="354" y="409" width="1" height="54"/><rect x="354" y="464" width="1" height="52"/><rect x="355" y="445" width="1" height="18"/><rect x="355" y="464" width="1" height="87"/><rect x="356" y="464" width="1" height="16"/><rect x="357" y="409" width="1" height="54"/><rect x="357" y="464" width="1" height="52"/><rect x="358" y="374" width="1" height="89"/><rect x="359" y="464" width="1" height="16"/><rect x="360" y="409" width="1" height="54"/><rect x="360" y="464" width="1" height="52"/><rect x="361" y="374" width="1" height="89"/><rect x="362" y="409" width="1" height="54"/><rect x="362" y="464" width="1" height="17"/><rect x="363" y="464" width="1" height="52"/><rect x="364" y="374" width="1" height="89"/><rect x="365" y="409" width="1" height="54"/><rect x="365" y="464" width="1" height="17"/><rect x="366" y="464" width="1" height="52"/><rect x="367" y="374" width="1" height="89"/><rect x="368" y="409" width="1" height="54"/><rect x="368" y="464" width="1" height="17"/><rect x="369" y="464" width="1" height="53"/><rect x="370" y="374" width="1" height="89"/><rect x="371" y="409" width="1" height="54"/><rect x="371" y="464" width="1" height="17"/><rect x="372" y="464" width="1" height="53"/><rect x="373" y="374" width="1" height="89"/><rect x="374" y="409" width="1" height="54"/><rect x="374" y="464" width="1" height="17"/><rect x="375" y="445" width="1" height="18"/><rect x="375" y="464" width="1" height="53"/><rect x="376" y="374" width="1" height="89"/><rect x="377" y="409" width="1" height="54"/><rect x="377" y="464" width="1" height="17"/><rect x="378" y="445" width="1" height="18"/><rect x="378" y="464" width="1" height="53"/><rect x="379" y="374" width="1" height="89"/><rect x="380" y="409" width="1" height="54"/><rect x="380" y="464" width="1" height="17"/><rect x="381" y="445" width="1" height="18"/><rect x="381" y="464" width="1" height="53"/><rect x="382" y="374" width="1" height="89"/><rect x="383" y="409" width="1" height="54"/><rect x="383" y="464" width="1" height="17"/><rect x="384" y="445" width="1" height="18"/><rect x="384" y="464" width="1" height="53"/><rect x="385" y="374" width="1" height="89"/><rect x="386" y="410" width="1" height="53"/><rect x="386" y="464" width="1" height="17"/><rect x="387" y="445" width="1" height="18"/><rect x="387" y="464" width="1" height="53"/><rect x="388" y="374" width="1" height="89"/><rect x="388" y="464" width="1" height="17"/><rect x="389" y="410" width="1" height="53"/><rect x="390" y="445" width="1" height="18"/><rect x="390" y="464" width="1" height="53"/><rect x="391" y="374" width="1" height="89"/><rect x="391" y="464" width="1" height="17"/><rect x="392" y="410" width="1" height="53"/><rect x="393" y="446" width="1" height="17"/><rect x="393" y="464" width="1" height="53"/><rect x="394" y="374" width="1" height="89"/><rect x="394" y="464" width="1" height="17"/><rect x="395" y="410" width="1" height="53"/><rect x="396" y="446" width="1" height="17"/><rect x="396" y="464" width="1" height="53"/><rect x="397" y="374" width="1" height="89"/><rect x="397" y="464" width="1" height="18"/><rect x="398" y="410" width="1" height="53"/><rect x="399" y="446" width="1" height="17"/><rect x="399" y="464" width="1" height="53"/><rect x="400" y="374" width="1" height="89"/><rect x="400" y="464" width="1" height="18"/><rect x="401" y="410" width="1" height="53"/><rect x="401" y="464" width="1" height="53"/><rect x="402" y="446" width="1" height="17"/><rect x="403" y="374" width="1" height="89"/><rect x="403" y="464" width="1" height="18"/><rect x="404" y="410" width="1" height="53"/><rect x="404" y="464" width="1" height="54"/><rect x="405" y="446" width="1" height="17"/><rect x="406" y="374" width="1" height="89"/><rect x="406" y="464" width="1" height="18"/><rect x="407" y="410" width="1" height="53"/><rect x="407" y="464" width="1" height="54"/><rect x="408" y="446" width="1" height="17"/><rect x="409" y="374" width="1" height="89"/><rect x="409" y="464" width="1" height="18"/><rect x="410" y="410" width="1" height="53"/><rect x="410" y="464" width="1" height="54"/><rect x="411" y="374" width="1" height="89"/><rect x="412" y="464" width="1" height="18"/><rect x="413" y="410" width="1" height="53"/><rect x="413" y="464" width="1" height="54"/><rect x="414" y="375" width="1" height="88"/><rect x="415" y="464" width="1" height="18"/><rect x="416" y="410" width="1" height="53"/><rect x="416" y="464" width="1" height="54"/><rect x="417" y="375" width="1" height="88"/><rect x="418" y="464" width="1" height="18"/><rect x="419" y="410" width="1" height="53"/><rect x="419" y="464" width="1" height="54"/><rect x="420" y="375" width="1" height="88"/><rect x="421" y="464" width="1" height="18"/><rect x="422" y="411" width="1" height="52"/><rect x="422" y="464" width="1" height="54"/><rect x="423" y="375" width="1" height="88"/><rect x="424" y="411" width="1" height="52"/><rect x="424" y="464" width="1" height="18"/><rect x="425" y="464" width="1" height="54"/><rect x="426" y="375" width="1" height="88"/><rect x="427" y="411" width="1" height="52"/><rect x="427" y="464" width="1" height="18"/><rect x="428" y="464" width="1" height="54"/><rect x="429" y="375" width="1" height="88"/><rect x="430" y="411" width="1" height="52"/><rect x="430" y="464" width="1" height="18"/><rect x="431" y="464" width="1" height="54"/><rect x="432" y="375" width="1" height="88"/><rect x="433" y="411" width="1" height="52"/><rect x="433" y="464" width="1" height="18"/><rect x="434" y="464" width="1" height="54"/><rect x="435" y="375" width="1" height="88"/><rect x="436" y="411" width="1" height="52"/><rect x="436" y="464" width="1" height="19"/><rect x="437" y="447" width="1" height="16"/><rect x="437" y="464" width="1" height="54"/><rect x="438" y="375" width="1" height="88"/><rect x="439" y="411" width="1" height="52"/><rect x="439" y="464" width="1" height="19"/><rect x="440" y="447" width="1" height="16"/><rect x="440" y="464" width="1" height="55"/><rect x="441" y="375" width="1" height="88"/><rect x="442" y="411" width="1" height="52"/><rect x="442" y="464" width="1" height="19"/><rect x="443" y="447" width="1" height="16"/><rect x="443" y="464" width="1" height="55"/><rect x="444" y="375" width="1" height="88"/><rect x="445" y="411" width="1" height="52"/><rect x="445" y="464" width="1" height="19"/><rect x="446" y="447" width="1" height="16"/><rect x="446" y="464" width="1" height="55"/><rect x="447" y="375" width="1" height="88"/><rect x="448" y="411" width="1" height="52"/><rect x="448" y="464" width="1" height="19"/><rect x="449" y="447" width="1" height="16"/><rect x="449" y="464" width="1" height="55"/><rect x="450" y="376" width="1" height="87"/><rect x="450" y="464" width="1" height="19"/><rect x="451" y="411" width="1" height="52"/><rect x="452" y="447" width="1" height="16"/><rect x="452" y="464" width="1" height="55"/><rect x="453" y="376" width="1" height="87"/><rect x="453" y="464" width="1" height="19"/><rect x="454" y="411" width="1" height="52"/><rect x="455" y="447" width="1" height="16"/><rect x="455" y="464" width="1" height="55"/><rect x="456" y="376" width="1" height="87"/><rect x="456" y="464" width="1" height="19"/><rect x="457" y="412" width="1" height="51"/><rect x="458" y="447" width="1" height="16"/><rect x="458" y="464" width="1" height="55"/><rect x="459" y="376" width="1" height="87"/><rect x="459" y="464" width="1" height="19"/><rect x="460" y="412" width="1" height="51"/><rect x="460" y="464" width="1" height="55"/><rect x="461" y="447" width="1" height="16"/><rect x="462" y="376" width="1" height="87"/><rect x="462" y="464" width="1" height="19"/><rect x="463" y="412" width="1" height="51"/><rect x="463" y="464" width="1" height="55"/><rect x="464" y="448" width="1" height="15"/><rect x="465" y="376" width="1" height="87"/><rect x="465" y="464" width="1" height="19"/><rect x="466" y="412" width="1" height="51"/><rect x="466" y="464" width="1" height="55"/><rect x="467" y="448" width="1" height="15"/><rect x="468" y="376" width="1" height="87"/><rect x="468" y="464" width="1" height="19"/><rect x="469" y="412" width="1" height="51"/><rect x="469" y="464" width="1" height="55"/><rect x="470" y="448" width="1" height="15"/><rect x="471" y="376" width="1" height="87"/><rect x="471" y="464" width="1" height="20"/><rect x="472" y="412" width="1" height="51"/><rect x="472" y="464" width="1" height="55"/><rect x="473" y="376" width="1" height="87"/><rect x="474" y="464" width="1" height="20"/><rect x="475" y="412" width="1" height="51"/><rect x="475" y="464" width="1" height="55"/><rect x="476" y="376" width="1" height="87"/><rect x="477" y="464" width="1" height="20"/><rect x="478" y="412" width="1" height="51"/><rect x="478" y="464" width="1" height="56"/><rect x="479" y="376" width="1" height="87"/><rect x="480" y="464" width="1" height="20"/><rect x="481" y="412" width="1" height="51"/><rect x="481" y="464" width="1" height="56"/><rect x="482" y="376" width="1" height="87"/><rect x="483" y="464" width="1" height="20"/><rect x="484" y="412" width="1" height="51"/><rect x="484" y="464" width="1" height="56"/><rect x="485" y="377" width="1" height="86"/><rect x="486" y="412" width="1" height="51"/><rect x="486" y="464" width="1" height="20"/><rect x="487" y="464" width="1" height="56"/><rect x="488" y="377" width="1" height="86"/><rect x="489" y="412" width="1" height="51"/><rect x="489" y="464" width="1" height="20"/><rect x="490" y="464" width="1" height="56"/><rect x="491" y="377" width="1" height="86"/><rect x="492" y="413" width="1" height="50"/><rect x="492" y="464" width="1" height="20"/><rect x="493" y="464" width="1" height="56"/><rect x="494" y="377" width="1" height="86"/><rect x="495" y="413" width="1" height="50"/><rect x="495" y="464" width="1" height="20"/><rect x="496" y="464" width="1" height="56"/><rect x="497" y="377" width="1" height="86"/><rect x="498" y="413" width="1" height="50"/><rect x="498" y="464" width="1" height="20"/><rect x="499" y="449" width="1" height="14"/><rect x="499" y="464" width="1" height="56"/><rect x="500" y="377" width="1" height="86"/><rect x="501" y="413" width="1" height="50"/><rect x="501" y="464" width="1" height="20"/><rect x="502" y="449" width="1" height="14"/><rect x="502" y="464" width="1" height="56"/><rect x="503" y="377" width="1" height="86"/><rect x="504" y="413" width="1" height="50"/><rect x="504" y="464" width="1" height="20"/><rect x="505" y="449" width="1" height="14"/><rect x="505" y="464" width="1" height="56"/><rect x="506" y="377" width="1" height="86"/><rect x="507" y="413" width="1" height="50"/><rect x="507" y="464" width="1" height="21"/><rect x="508" y="449" width="1" height="14"/><rect x="508" y="464" width="1" height="56"/><rect x="509" y="377" width="1" height="86"/><rect x="509" y="464" width="1" height="21"/><rect x="510" y="413" width="1" height="50"/><rect x="511" y="449" width="1" height="14"/><rect x="511" y="464" width="1" height="56"/><rect x="512" y="377" width="1" height="86"/><rect x="512" y="464" width="1" height="21"/><rect x="513" y="413" width="1" height="50"/><rect x="514" y="449" width="1" height="14"/><rect x="514" y="464" width="1" height="57"/><rect x="515" y="377" width="1" height="86"/><rect x="515" y="464" width="1" height="21"/><rect x="516" y="413" width="1" height="50"/><rect x="517" y="449" width="1" height="14"/><rect x="517" y="464" width="1" height="57"/><rect x="518" y="377" width="1" height="86"/><rect x="518" y="464" width="1" height="21"/><rect x="519" y="413" width="1" height="50"/><rect x="520" y="449" width="1" height="14"/><rect x="520" y="464" width="1" height="57"/><rect x="521" y="377" width="1" height="86"/><rect x="521" y="464" width="1" height="21"/><rect x="522" y="413" width="1" height="50"/><rect x="522" y="464" width="1" height="57"/><rect x="523" y="449" width="1" height="14"/><rect x="524" y="378" width="1" height="85"/><rect x="524" y="464" width="1" height="21"/><rect x="525" y="413" width="1" height="50"/><rect x="525" y="464" width="1" height="57"/><rect x="526" y="449" width="1" height="14"/><rect x="527" y="378" width="1" height="85"/><rect x="527" y="464" width="1" height="21"/><rect x="528" y="414" width="1" height="49"/><rect x="528" y="464" width="1" height="57"/><rect x="529" y="449" width="1" height="14"/><rect x="530" y="378" width="1" height="85"/><rect x="530" y="464" width="1" height="21"/><rect x="531" y="414" width="1" height="49"/><rect x="531" y="464" width="1" height="57"/><rect x="532" y="449" width="1" height="14"/><rect x="533" y="378" width="1" height="85"/><rect x="533" y="464" width="1" height="21"/><rect x="534" y="414" width="1" height="49"/><rect x="534" y="464" width="1" height="57"/><rect x="535" y="378" width="1" height="85"/><rect x="536" y="464" width="1" height="21"/><rect x="537" y="414" width="1" height="49"/><rect x="537" y="464" width="1" height="57"/><rect x="538" y="378" width="1" height="85"/><rect x="539" y="464" width="1" height="21"/><rect x="540" y="414" width="1" height="49"/><rect x="540" y="464" width="1" height="57"/><rect x="541" y="378" width="1" height="85"/><rect x="542" y="464" width="1" height="22"/><rect x="543" y="414" width="1" height="49"/><rect x="543" y="464" width="1" height="57"/><rect x="544" y="378" width="1" height="85"/><rect x="545" y="464" width="1" height="22"/><rect x="546" y="414" width="1" height="49"/><rect x="546" y="464" width="1" height="57"/><rect x="547" y="378" width="1" height="85"/><rect x="548" y="414" width="1" height="49"/><rect x="548" y="464" width="1" height="22"/><rect x="549" y="464" width="1" height="58"/><rect x="550" y="378" width="1" height="85"/><rect x="551" y="414" width="1" height="49"/><rect x="551" y="464" width="1" height="22"/><rect x="552" y="464" width="1" height="58"/><rect x="553" y="378" width="1" height="85"/><rect x="554" y="414" width="1" height="49"/><rect x="554" y="464" width="1" height="22"/><rect x="555" y="464" width="1" height="58"/><rect x="556" y="378" width="1" height="85"/><rect x="557" y="414" width="1" height="49"/><rect x="557" y="464" width="1" height="22"/><rect x="558" y="450" width="1" height="13"/><rect x="558" y="464" width="1" height="58"/><rect x="559" y="379" width="1" height="84"/><rect x="560" y="414" width="1" height="49"/><rect x="560" y="464" width="1" height="22"/><rect x="561" y="450" width="1" height="13"/><rect x="561" y="464" width="1" height="58"/><rect x="562" y="379" width="1" height="84"/><rect x="563" y="414" width="1" height="49"/><rect x="563" y="464" width="1" height="22"/><rect x="564" y="450" width="1" height="13"/><rect x="564" y="464" width="1" height="58"/><rect x="565" y="379" width="1" height="84"/><rect x="566" y="415" width="1" height="48"/><rect x="566" y="464" width="1" height="22"/><rect x="567" y="450" width="1" height="13"/><rect x="567" y="464" width="1" height="58"/><rect x="568" y="379" width="1" height="84"/><rect x="569" y="415" width="1" height="48"/><rect x="569" y="464" width="1" height="22"/><rect x="570" y="450" width="1" height="13"/><rect x="570" y="464" width="1" height="58"/><rect x="571" y="379" width="1" height="84"/><rect x="571" y="464" width="1" height="22"/><rect x="572" y="415" width="1" height="48"/><rect x="573" y="451" width="1" height="12"/><rect x="573" y="464" width="1" height="58"/><rect x="574" y="379" width="1" height="84"/><rect x="574" y="464" width="1" height="22"/><rect x="575" y="415" width="1" height="48"/><rect x="576" y="451" width="1" height="12"/><rect x="576" y="464" width="1" height="58"/><rect x="577" y="379" width="1" height="84"/><rect x="577" y="464" width="1" height="23"/><rect x="578" y="415" width="1" height="48"/><rect x="579" y="451" width="1" height="12"/><rect x="579" y="464" width="1" height="58"/><rect x="580" y="379" width="1" height="84"/><rect x="580" y="464" width="1" height="23"/><rect x="581" y="415" width="1" height="48"/><rect x="582" y="451" width="1" height="12"/><rect x="582" y="464" width="1" height="58"/><rect x="583" y="379" width="1" height="84"/><rect x="583" y="464" width="1" height="23"/><rect x="584" y="415" width="1" height="48"/><rect x="584" y="464" width="1" height="59"/><rect x="585" y="451" width="1" height="12"/><rect x="586" y="379" width="1" height="84"/><rect x="586" y="464" width="1" height="23"/><rect x="587" y="415" width="1" height="48"/><rect x="587" y="464" width="1" height="59"/><rect x="588" y="451" width="1" height="12"/><rect x="589" y="379" width="1" height="84"/><rect x="589" y="464" width="1" height="23"/><rect x="590" y="415" width="1" height="48"/><rect x="590" y="464" width="1" height="59"/><rect x="591" y="451" width="1" height="12"/><rect x="592" y="379" width="1" height="84"/><rect x="592" y="464" width="1" height="23"/><rect x="593" y="415" width="1" height="48"/><rect x="593" y="464" width="1" height="59"/><rect x="594" y="380" width="1" height="83"/><rect x="595" y="464" width="1" height="23"/><rect x="596" y="415" width="1" height="48"/><rect x="596" y="464" width="1" height="59"/><rect x="597" y="380" width="1" height="83"/><rect x="598" y="464" width="1" height="23"/><rect x="599" y="415" width="1" height="48"/><rect x="599" y="464" width="1" height="59"/><rect x="600" y="380" width="1" height="83"/><rect x="601" y="464" width="1" height="23"/><rect x="602" y="416" width="1" height="47"/><rect x="602" y="464" width="1" height="59"/><rect x="603" y="380" width="1" height="83"/><rect x="604" y="464" width="1" height="23"/><rect x="605" y="416" width="1" height="47"/><rect x="605" y="464" width="1" height="59"/><rect x="606" y="380" width="1" height="83"/><rect x="607" y="416" width="1" height="47"/><rect x="607" y="464" width="1" height="23"/><rect x="608" y="464" width="1" height="59"/><rect x="609" y="380" width="1" height="83"/><rect x="610" y="416" width="1" height="47"/><rect x="610" y="464" width="1" height="23"/><rect x="611" y="464" width="1" height="59"/><rect x="612" y="380" width="1" height="83"/><rect x="613" y="416" width="1" height="47"/><rect x="613" y="464" width="1" height="24"/><rect x="614" y="464" width="1" height="59"/><rect x="615" y="380" width="1" height="83"/><rect x="616" y="416" width="1" height="47"/><rect x="616" y="464" width="1" height="24"/><rect x="617" y="464" width="1" height="59"/><rect x="618" y="380" width="1" height="83"/><rect x="619" y="416" width="1" height="47"/><rect x="619" y="464" width="1" height="24"/><rect x="620" y="452" width="1" height="11"/><rect x="620" y="464" width="1" height="60"/><rect x="621" y="380" width="1" height="83"/><rect x="622" y="416" width="1" height="47"/><rect x="622" y="464" width="1" height="24"/><rect x="623" y="452" width="1" height="11"/><rect x="623" y="464" width="1" height="60"/><rect x="624" y="380" width="1" height="83"/><rect x="625" y="416" width="1" height="47"/><rect x="625" y="464" width="1" height="24"/><rect x="626" y="452" width="1" height="11"/><rect x="626" y="464" width="1" height="60"/><rect x="627" y="381" width="1" height="82"/><rect x="628" y="416" width="1" height="47"/><rect x="628" y="464" width="1" height="24"/><rect x="629" y="452" width="1" height="11"/><rect x="629" y="464" width="1" height="60"/><rect x="630" y="381" width="1" height="82"/><rect x="631" y="417" width="1" height="46"/><rect x="631" y="464" width="1" height="24"/><rect x="632" y="452" width="1" height="11"/><rect x="632" y="464" width="1" height="60"/><rect x="633" y="381" width="1" height="82"/><rect x="633" y="464" width="1" height="24"/><rect x="634" y="417" width="1" height="46"/><rect x="635" y="453" width="1" height="10"/><rect x="635" y="464" width="1" height="60"/><rect x="636" y="381" width="1" height="82"/><rect x="636" y="464" width="1" height="24"/><rect x="637" y="417" width="1" height="46"/><rect x="638" y="453" width="1" height="10"/><rect x="638" y="464" width="1" height="60"/><rect x="639" y="381" width="1" height="82"/><rect x="639" y="464" width="1" height="25"/><rect x="640" y="417" width="1" height="46"/><rect x="641" y="453" width="1" height="10"/><rect x="641" y="464" width="1" height="61"/><rect x="642" y="381" width="1" height="82"/><rect x="642" y="464" width="1" height="25"/><rect x="643" y="417" width="1" height="46"/><rect x="643" y="464" width="1" height="61"/><rect x="644" y="453" width="1" height="10"/><rect x="645" y="382" width="1" height="81"/><rect x="645" y="464" width="1" height="25"/><rect x="646" y="418" width="1" height="45"/><rect x="646" y="464" width="1" height="61"/><rect x="647" y="454" width="1" height="9"/><rect x="648" y="382" width="1" height="81"/><rect x="648" y="464" width="1" height="26"/><rect x="649" y="418" width="1" height="45"/><rect x="649" y="464" width="1" height="62"/><rect x="650" y="454" width="1" height="9"/><rect x="651" y="383" width="1" height="80"/><rect x="651" y="464" width="1" height="26"/><rect x="652" y="419" width="1" height="44"/><rect x="652" y="464" width="1" height="62"/><rect x="653" y="455" width="1" height="8"/><rect x="654" y="384" width="1" height="79"/><rect x="654" y="464" width="1" height="27"/><rect x="655" y="420" width="1" height="43"/><rect x="655" y="464" width="1" height="64"/><rect x="656" y="386" width="1" height="77"/><rect x="657" y="464" width="1" height="30"/><rect x="658" y="423" width="1" height="40"/><rect x="658" y="464" width="1" height="68"/><rect x="659" y="394" width="1" height="69"/><rect x="660" y="464" width="1" height="40"/><rect x="130" y="438" width="1" height="25" fill="#ff0000"/><rect x="55" y="373" width="606" height="1" fill="#000"/><rect x="660" y="373" width="1" height="180" fill="#000"/><rect x="55" y="373" width="2" height="180" fill="#000"/><rect x="55" y="551" width="606" height="2" fill="#000"/><rect x="52" y="377" width="3" height="1" fill="#808080"/><text x="50.5" y="381" font-size="11" fill="#000" text-anchor="end" font-weight="400" >3</text><rect x="52" y="406" width="3" height="1" fill="#808080"/><text x="50.5" y="410" font-size="11" fill="#000" text-anchor="end" font-weight="400" >2</text><rect x="52" y="434" width="3" height="1" fill="#808080"/><text x="50.5" y="438" font-size="11" fill="#000" text-anchor="end" font-weight="400" >1</text><rect x="52" y="463" width="3" height="1" fill="#808080"/><text x="50.5" y="467" font-size="11" fill="#000" text-anchor="end" font-weight="400" >0</text><rect x="52" y="491" width="3" height="1" fill="#808080"/><text x="50.5" y="495" font-size="11" fill="#000" text-anchor="end" font-weight="400" >-1</text><rect x="52" y="520" width="3" height="1" fill="#808080"/><text x="50.5" y="524" font-size="11" fill="#000" text-anchor="end" font-weight="400" >-2</text><rect x="52" y="548" width="3" height="1" fill="#808080"/><text x="50.5" y="552" font-size="11" fill="#000" text-anchor="end" font-weight="400" >-3</text><rect x="53" y="541" width="2" height="1" fill="#a0a0a0"/><rect x="53" y="534" width="2" height="1" fill="#a0a0a0"/><rect x="53" y="527" width="2" height="1" fill="#a0a0a0"/><rect x="53" y="512" width="2" height="1" fill="#a0a0a0"/><rect x="53" y="505" width="2" height="1" fill="#a0a0a0"/><rect x="53" y="498" width="2" height="1" fill="#a0a0a0"/><rect x="53" y="484" width="2" height="1" fill="#a0a0a0"/><rect x="53" y="477" width="2" height="1" fill="#a0a0a0"/><rect x="53" y="470" width="2" height="1" fill="#a0a0a0"/><rect x="53" y="455" width="2" height="1" fill="#a0a0a0"/><rect x="53" y="448" width="2" height="1" fill="#a0a0a0"/><rect x="53" y="441" width="2" height="1" fill="#a0a0a0"/><rect x="53" y="427" width="2" height="1" fill="#a0a0a0"/><rect x="53" y="420" width="2" height="1" fill="#a0a0a0"/><rect x="53" y="413" width="2" height="1" fill="#a0a0a0"/><rect x="53" y="398" width="2" height="1" fill="#a0a0a0"/><rect x="53" y="391" width="2" height="1" fill="#a0a0a0"/><rect x="53" y="384" width="2" height="1" fill="#a0a0a0"/><rect x="56" y="553" width="1" height="4" fill="#808080"/><text x="56.5" y="569" font-size="11" fill="#000" text-anchor="middle" font-weight="400" >0</text><rect x="86" y="553" width="1" height="4" fill="#808080"/><text x="86.5" y="569" font-size="11" fill="#000" text-anchor="middle" font-weight="400" >50</text><rect x="115" y="553" width="1" height="4" fill="#808080"/><text x="115.5" y="569" font-size="11" fill="#000" text-anchor="middle" font-weight="400" >100</text><rect x="145" y="553" width="1" height="4" fill="#808080"/><text x="145.5" y="569" font-size="11" fill="#000" text-anchor="middle" font-weight="400" >150</text><rect x="174" y="553" width="1" height="4" fill="#808080"/><text x="174.5" y="569" font-size="11" fill="#000" text-anchor="middle" font-weight="400" >200</text><rect x="204" y="553" width="1" height="4" fill="#808080"/><text x="204.5" y="569" font-size="11" fill="#000" text-anchor="middle" font-weight="400" >250</text><rect x="233" y="553" width="1" height="4" fill="#808080"/><text x="233.5" y="569" font-size="11" fill="#000" text-anchor="middle" font-weight="400" >300</text><rect x="263" y="553" width="1" height="4" fill="#808080"/><text x="263.5" y="569" font-size="11" fill="#000" text-anchor="middle" font-weight="400" >350</text><rect x="292" y="553" width="1" height="4" fill="#808080"/><text x="292.5" y="569" font-size="11" fill="#000" text-anchor="middle" font-weight="400" >400</text><rect x="322" y="553" width="1" height="4" fill="#808080"/><text x="322.5" y="569" font-size="11" fill="#000" text-anchor="middle" font-weight="400" >450</text><rect x="351" y="553" width="1" height="4" fill="#808080"/><text x="351.5" y="569" font-size="11" fill="#000" text-anchor="middle" font-weight="400" >500</text><rect x="381" y="553" width="1" height="4" fill="#808080"/><text x="381.5" y="569" font-size="11" fill="#000" text-anchor="middle" font-weight="400" >550</text><rect x="410" y="553" width="1" height="4" fill="#808080"/><text x="410.5" y="569" font-size="11" fill="#000" text-anchor="middle" font-weight="400" >600</text><rect x="440" y="553" width="1" height="4" fill="#808080"/><text x="440.5" y="569" font-size="11" fill="#000" text-anchor="middle" font-weight="400" >650</text><rect x="469" y="553" width="1" height="4" fill="#808080"/><text x="469.5" y="569" font-size="11" fill="#000" text-anchor="middle" font-weight="400" >700</text><rect x="499" y="553" width="1" height="4" fill="#808080"/><text x="499.5" y="569" font-size="11" fill="#000" text-anchor="middle" font-weight="400" >750</text><rect x="528" y="553" width="1" height="4" fill="#808080"/><text x="528.5" y="569" font-size="11" fill="#000" text-anchor="middle" font-weight="400" >800</text><rect x="558" y="553" width="1" height="4" fill="#808080"/><text x="558.5" y="569" font-size="11" fill="#000" text-anchor="middle" font-weight="400" >850</text><rect x="587" y="553" width="1" height="4" fill="#808080"/><text x="587.5" y="569" font-size="11" fill="#000" text-anchor="middle" font-weight="400" >900</text><rect x="617" y="553" width="1" height="4" fill="#808080"/><text x="617.5" y="569" font-size="11" fill="#000" text-anchor="middle" font-weight="400" >950</text><rect x="646" y="553" width="1" height="4" fill="#808080"/><text x="646.5" y="569" font-size="11" fill="#000" text-anchor="middle" font-weight="400" >1 000</text><rect x="63" y="553" width="1" height="3" fill="#a0a0a0"/><rect x="71" y="553" width="1" height="3" fill="#a0a0a0"/><rect x="78" y="553" width="1" height="3" fill="#a0a0a0"/><rect x="93" y="553" width="1" height="3" fill="#a0a0a0"/><rect x="100" y="553" width="1" height="3" fill="#a0a0a0"/><rect x="108" y="553" width="1" height="3" fill="#a0a0a0"/><rect x="122" y="553" width="1" height="3" fill="#a0a0a0"/><rect x="130" y="553" width="1" height="3" fill="#a0a0a0"/><rect x="137" y="553" width="1" height="3" fill="#a0a0a0"/><rect x="152" y="553" width="1" height="3" fill="#a0a0a0"/><rect x="159" y="553" width="1" height="3" fill="#a0a0a0"/><rect x="167" y="553" width="1" height="3" fill="#a0a0a0"/><rect x="181" y="553" width="1" height="3" fill="#a0a0a0"/><rect x="189" y="553" width="1" height="3" fill="#a0a0a0"/><rect x="196" y="553" width="1" height="3" fill="#a0a0a0"/><rect x="211" y="553" width="1" height="3" fill="#a0a0a0"/><rect x="218" y="553" width="1" height="3" fill="#a0a0a0"/><rect x="226" y="553" width="1" height="3" fill="#a0a0a0"/><rect x="240" y="553" width="1" height="3" fill="#a0a0a0"/><rect x="248" y="553" width="1" height="3" fill="#a0a0a0"/><rect x="255" y="553" width="1" height="3" fill="#a0a0a0"/><rect x="270" y="553" width="1" height="3" fill="#a0a0a0"/><rect x="277" y="553" width="1" height="3" fill="#a0a0a0"/><rect x="285" y="553" width="1" height="3" fill="#a0a0a0"/><rect x="299" y="553" width="1" height="3" fill="#a0a0a0"/><rect x="307" y="553" width="1" height="3" fill="#a0a0a0"/><rect x="314" y="553" width="1" height="3" fill="#a0a0a0"/><rect x="329" y="553" width="1" height="3" fill="#a0a0a0"/><rect x="336" y="553" width="1" height="3" fill="#a0a0a0"/><rect x="344" y="553" width="1" height="3" fill="#a0a0a0"/><rect x="358" y="553" width="1" height="3" fill="#a0a0a0"/><rect x="366" y="553" width="1" height="3" fill="#a0a0a0"/><rect x="373" y="553" width="1" height="3" fill="#a0a0a0"/><rect x="388" y="553" width="1" height="3" fill="#a0a0a0"/><rect x="395" y="553" width="1" height="3" fill="#a0a0a0"/><rect x="403" y="553" width="1" height="3" fill="#a0a0a0"/><rect x="417" y="553" width="1" height="3" fill="#a0a0a0"/><rect x="425" y="553" width="1" height="3" fill="#a0a0a0"/><rect x="432" y="553" width="1" height="3" fill="#a0a0a0"/><rect x="447" y="553" width="1" height="3" fill="#a0a0a0"/><rect x="454" y="553" width="1" height="3" fill="#a0a0a0"/><rect x="462" y="553" width="1" height="3" fill="#a0a0a0"/><rect x="476" y="553" width="1" height="3" fill="#a0a0a0"/><rect x="484" y="553" width="1" height="3" fill="#a0a0a0"/><rect x="491" y="553" width="1" height="3" fill="#a0a0a0"/><rect x="506" y="553" width="1" height="3" fill="#a0a0a0"/><rect x="513" y="553" width="1" height="3" fill="#a0a0a0"/><rect x="521" y="553" width="1" height="3" fill="#a0a0a0"/><rect x="535" y="553" width="1" height="3" fill="#a0a0a0"/><rect x="543" y="553" width="1" height="3" fill="#a0a0a0"/><rect x="550" y="553" width="1" height="3" fill="#a0a0a0"/><rect x="565" y="553" width="1" height="3" fill="#a0a0a0"/><rect x="572" y="553" width="1" height="3" fill="#a0a0a0"/><rect x="580" y="553" width="1" height="3" fill="#a0a0a0"/><rect x="594" y="553" width="1" height="3" fill="#a0a0a0"/><rect x="602" y="553" width="1" height="3" fill="#a0a0a0"/><rect x="609" y="553" width="1" height="3" fill="#a0a0a0"/><rect x="624" y="553" width="1" height="3" fill="#a0a0a0"/><rect x="631" y="553" width="1" height="3" fill="#a0a0a0"/><rect x="639" y="553" width="1" height="3" fill="#a0a0a0"/><rect x="653" y="553" width="1" height="3" fill="#a0a0a0"/><text x="357.5" y="584" font-size="11" fill="#000" text-anchor="middle" font-weight="400" >N, [номер]</text><text x="0" y="0" font-size="11" fill="#000" text-anchor="middle" font-weight="400" transform="translate(34,462.5) rotate(-90)">Ф(F), [рад]</text><rect x="9" y="8" width="16" height="14" rx="2" fill="#000" shape-rendering="auto"/><rect x="10" y="9" width="14" height="12" rx="1.2" fill="#a8a8a8" shape-rendering="auto"/><rect x="11" y="10" width="12" height="10" fill="#d8d8d8"/><rect x="12" y="11" width="11" height="9" fill="#909090"/><rect x="12" y="11" width="10" height="8" fill="#005800"/><path d="M12.5 17.5 L15.5 13.5 L18.5 17.5 L21.5 13.5" stroke="#98c898" stroke-width="0.9" fill="none" shape-rendering="auto"/><text x="30" y="20.3" font-size="12" fill="#ffffff" text-anchor="start" font-weight="400" letter-spacing="-0.05" >Расчет Спектров Непериодических Сигналов - [Спектр сигнала: Трапеция]</text><rect x="563" y="15" width="10" height="1" fill="#ffffff"/><rect x="608.5" y="10.5" width="9" height="9" fill="none" stroke="#fff" stroke-width="1"/><path d="M654 10 L664.5 20.5 M664.5 10 L654 20.5" stroke="#fff" stroke-width="1.1"/><rect x="8" y="33" width="16" height="14" rx="2" fill="#000" shape-rendering="auto"/><rect x="9" y="34" width="14" height="12" rx="1.2" fill="#a8a8a8" shape-rendering="auto"/><rect x="10" y="35" width="12" height="10" fill="#d8d8d8"/><rect x="11" y="36" width="11" height="9" fill="#909090"/><rect x="11" y="36" width="10" height="8" fill="#005800"/><path d="M11.5 42.5 L14.5 38.5 L17.5 42.5 L20.5 38.5" stroke="#98c898" stroke-width="0.9" fill="none" shape-rendering="auto"/><text x="31" y="45" font-size="12" fill="#000" text-anchor="start" font-weight="400" >Файл</text><rect x="31" y="47" width="8" height="1" fill="#000"/><text x="74" y="45" font-size="12" fill="#000" text-anchor="start" font-weight="400" >Сигнал</text><rect x="74" y="47" width="8" height="1" fill="#000"/><rect x="625.5" y="32.5" width="17" height="17" fill="#ffffff" stroke="#dcdcdc" stroke-width="1"/><rect x="644.5" y="32.5" width="17" height="17" fill="#ffffff" stroke="#dcdcdc" stroke-width="1"/><rect x="663.5" y="32.5" width="17" height="17" fill="#ffffff" stroke="#dcdcdc" stroke-width="1"/><rect x="630" y="43" width="6" height="2" fill="#5a6878"/><path d="M649.5 41.5 h6 v4 h-6 z M651.5 39.5 v-2 h6 v5 h-2" stroke="#5a6878" stroke-width="1" fill="none"/><rect x="649" y="40" width="7" height="2" fill="#5a6878"/><path d="M668.5 37.5 L675.5 44.5 M675.5 37.5 L668.5 44.5" stroke="#5a6878" stroke-width="1.6"/><rect x="11" y="59" width="16" height="13" fill="#ffffff"/><rect x="11" y="59" width="16" height="1" fill="#808080"/><rect x="11" y="63" width="16" height="1" fill="#808080"/><rect x="11" y="67" width="16" height="1" fill="#808080"/><rect x="11" y="71" width="2" height="1" fill="#808080"/><rect x="13" y="59" width="1" height="13" fill="#000"/><rect x="13" y="71" width="14" height="1" fill="#000"/><rect x="11" y="61" width="2" height="1" fill="#a0a0a0"/><rect x="11" y="65" width="2" height="1" fill="#a0a0a0"/><rect x="11" y="69" width="2" height="1" fill="#a0a0a0"/><rect x="13" y="73" width="1" height="1" fill="#606060"/><rect x="17" y="73" width="1" height="1" fill="#606060"/><rect x="21" y="73" width="1" height="1" fill="#606060"/><rect x="25" y="73" width="1" height="1" fill="#606060"/><path d="M14 69.5 L16 69 L18 66.5 L19.5 64 L21 63.5 L22.5 64 L24 66.5 L26 69 L27 69.5" stroke="#ff0000" stroke-width="1.2" fill="none" shape-rendering="auto"/><rect x="20" y="60" width="1" height="11" fill="#0000ff"/><rect x="21" y="61" width="3" height="1" fill="#000"/><path d="M23 59.5 L25 61.5 L23 63.5 Z" fill="#000"/><rect x="26" y="61" width="1" height="1" fill="#0000ff"/><rect x="36" y="55" width="1" height="21" fill="#a0a0a0"/><rect x="262" y="55" width="1" height="21" fill="#a0a0a0"/><rect x="303" y="55" width="1" height="21" fill="#a0a0a0"/><path d="M53 66 L62 57.5 L62 74.5 Z" fill="#008080" shape-rendering="auto"/><path d="M53.3 65.8 L61.5 58" stroke="#00ffff" stroke-width="1.1" shape-rendering="auto"/><path d="M53.3 66.2 L61.5 74 L61.5 58" stroke="#000080" stroke-width="1.1" fill="none" shape-rendering="auto"/><path d="M91 57.5 L100 66 L91 74.5 Z" fill="#008080" shape-rendering="auto"/><path d="M91.5 74 L91.5 58 L99.7 65.8" stroke="#00ffff" stroke-width="1.1" fill="none" shape-rendering="auto"/><path d="M91.5 74 L99.7 66.2 M91.5 59 L91.5 74" stroke="#000080" stroke-width="1.1" fill="none" shape-rendering="auto"/><rect x="123" y="58" width="18" height="16" fill="#000"/><rect x="125" y="59" width="14" height="2" fill="#0000ff"/><rect x="124" y="59" width="1" height="1" fill="#c0c0c0"/><rect x="139" y="59" width="1" height="1" fill="#c0c0c0"/><rect x="125" y="62" width="6" height="1" fill="#0000ff"/><rect x="125" y="63" width="6" height="3" fill="#ffffff"/><rect x="125" y="67" width="6" height="1" fill="#0000ff"/><rect x="125" y="68" width="6" height="3" fill="#ffffff"/><rect x="133" y="62" width="6" height="1" fill="#0000ff"/><rect x="133" y="63" width="6" height="3" fill="#ffffff"/><rect x="133" y="67" width="6" height="1" fill="#0000ff"/><rect x="133" y="68" width="6" height="3" fill="#ffffff"/><rect x="124" y="72" width="16" height="1" fill="#ffffff"/><rect x="160" y="58" width="18" height="16" fill="#000"/><rect x="162" y="59" width="14" height="2" fill="#0000ff"/><rect x="161" y="59" width="1" height="1" fill="#c0c0c0"/><rect x="176" y="59" width="1" height="1" fill="#c0c0c0"/><rect x="161" y="61" width="16" height="12" fill="#0b680b"/><rect x="162" y="62" width="7" height="5" fill="#000"/><rect x="163" y="63" width="5" height="1" fill="#0000ff"/><rect x="163" y="64" width="5" height="2" fill="#ffffff"/><rect x="165" y="65" width="7" height="5" fill="#000"/><rect x="166" y="66" width="5" height="1" fill="#0000ff"/><rect x="166" y="67" width="5" height="2" fill="#ffffff"/><rect x="169" y="68" width="7" height="5" fill="#000"/><rect x="170" y="69" width="5" height="1" fill="#0000ff"/><rect x="170" y="70" width="5" height="2" fill="#ffffff"/><rect x="197" y="58" width="18" height="16" fill="#000"/><rect x="199" y="59" width="14" height="2" fill="#0000ff"/><rect x="198" y="59" width="1" height="1" fill="#c0c0c0"/><rect x="213" y="59" width="1" height="1" fill="#c0c0c0"/><rect x="198" y="61" width="16" height="12" fill="#0b680b"/><rect x="200" y="69" width="2" height="1" fill="#ffffff"/><rect x="199" y="70" width="3" height="1" fill="#ff0000"/><rect x="199" y="71" width="4" height="1" fill="#000"/><rect x="205" y="69" width="2" height="1" fill="#ffffff"/><rect x="204" y="70" width="3" height="1" fill="#ffff00"/><rect x="204" y="71" width="4" height="1" fill="#000"/><rect x="210" y="69" width="2" height="1" fill="#ffffff"/><rect x="209" y="70" width="3" height="1" fill="#00ffff"/><rect x="209" y="71" width="4" height="1" fill="#000"/><circle cx="241.5" cy="65.5" r="6.5" fill="none" stroke="#ff0000" stroke-width="2" shape-rendering="auto"/><path d="M237 70 L246 61" stroke="#ff0000" stroke-width="2" shape-rendering="auto"/><path d="M276 69 L277 62 Q283 54.5 289.5 62 L290.5 69 Z" fill="#ffff90"/><path d="M276.5 70.5 L278 63.5 L283 63.5 L283.5 70.5 Z M290.5 70.5 L289 63.5 L284 63.5 L283.5 70.5 Z" fill="#ffffe0" stroke="#000" stroke-width="1"/><rect x="276" y="70" width="15" height="1" fill="#000"/><rect x="276" y="71.5" width="15" height="1.5" fill="#0000ff"/><rect x="281" y="72.5" width="5" height="1.5" fill="#0000ff"/><path d="M280.8 62 Q280.8 59.3 283.2 59.3 Q285.8 59.3 285.8 61.8 Q285.8 63.8 283.5 65 L283.3 66.5" stroke="#ff0000" stroke-width="2" fill="none"/><rect x="282" y="67" width="2.5" height="2" fill="#ff0000"/><rect x="319" y="58" width="11" height="16" fill="#000"/><rect x="320" y="59" width="9" height="14" fill="#ffff00"/><path d="M320 59 L323 59 L323 70 L320 73 Z" fill="#800000"/><rect x="323" y="59" width="1" height="11" fill="#000"/><rect x="321" y="59" width="2" height="1" fill="#00ffff"/><rect x="321" y="60" width="1" height="1" fill="#00ffff"/><rect x="323" y="63" width="1" height="1" fill="#ffff00"/><rect x="324" y="63" width="1" height="1" fill="#000"/><text x="200.5" y="613" font-size="11" fill="#000" text-anchor="middle" font-weight="400" letter-spacing="-0.3" >Ccos (C.Re):</text><text x="465" y="613" font-size="12" fill="#000" text-anchor="middle" font-weight="700" letter-spacing="0.35" >0.00671938882458</text><text x="200.5" y="630" font-size="11" fill="#000" text-anchor="middle" font-weight="400" letter-spacing="-0.3" >Csin (C.Im):</text><text x="465" y="630" font-size="12" fill="#000" text-anchor="middle" font-weight="700" letter-spacing="0.35" >0.00764301378994</text><text x="200.5" y="647" font-size="11" fill="#000" text-anchor="middle" font-weight="400" letter-spacing="-0.3" >Амплитуда (Cn):</text><text x="465" y="647" font-size="12" fill="#000" text-anchor="middle" font-weight="700" letter-spacing="0.35" >0.01017673061298</text><text x="200.5" y="664" font-size="11" fill="#000" text-anchor="middle" font-weight="400" letter-spacing="-0.3" >Фаза (Фn):</text><text x="465" y="664" font-size="12" fill="#000" text-anchor="middle" font-weight="700" letter-spacing="0.35" >0.84961825918912</text><text x="200.5" y="681" font-size="11" fill="#000" text-anchor="middle" font-weight="400" letter-spacing="-0.3" >Номер(частота):</text><text x="465" y="681" font-size="12" fill="#000" text-anchor="middle" font-weight="700" letter-spacing="0.35" >126</text><text x="75.3" y="615" font-size="11" fill="#0000ff" text-anchor="start" font-weight="400" letter-spacing="-0.6" >Csin</text><text x="114" y="648" font-size="11" fill="#0000ff" text-anchor="start" font-weight="400" >Ccos</text></svg></body></html>
